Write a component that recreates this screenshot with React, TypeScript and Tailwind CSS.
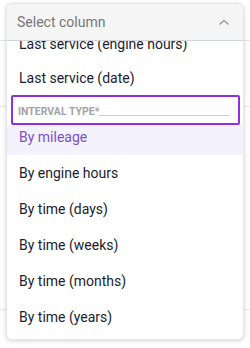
import React from 'react';

const before = ['Last service (engine hours)', 'Last service (date)'];
const after = ['By engine hours', 'By time (days)', 'By time (weeks)', 'By time (months)', 'By time (years)'];

function ChevronUp() {
  return (
    <svg width="10" height="6" viewBox="0 0 10 6" fill="none">
      <path d="M1 5L5 1.5L9 5" stroke="#9a9a9a" strokeWidth="1.6" strokeLinecap="round" strokeLinejoin="round" />
    </svg>
  );
}

export default function App() {
  return (
    <div className="relative w-[250px] h-[348px] bg-white overflow-hidden" style={{ fontFamily: 'Roboto, "Liberation Sans", sans-serif' }}>
      {/* table behind the menu */}
      <div className="absolute inset-0 flex flex-col">
        <div className="h-[41px] border-b border-gray-200" />
        <div className="h-[66px] border-b border-gray-200" />
        <div className="h-[203px] border-b border-gray-200" />
      </div>

      <div className="absolute left-[6px] top-[3px] w-[238px] h-[337px] bg-white rounded-md border border-gray-200 shadow-[0_1px_4px_rgba(0,0,0,0.18)] overflow-hidden flex flex-col">
        <div className="h-[37px] shrink-0 bg-[#f5f5f5] border-b border-gray-300 flex items-center justify-between pl-[10px] pr-[14px]">
          <span className="text-[14px] text-[#777777]">Select column</span>
          <ChevronUp />
        </div>

        <div className="flex-1 overflow-hidden">
          <div className="-mt-[14px]">
            {before.map((label) => (
              <div key={label} className="h-[34px] flex items-center pl-[12px] text-[14px] text-[#1a1d30]">
                {label}
              </div>
            ))}

            <div className="h-[30px] ml-[4px] mr-[3px] border-2 border-[#8f2fe4] rounded-[2px] flex items-end pl-[5px] pr-[9px] pb-[6px] bg-white">
              <span className="text-[10.5px] font-bold text-[#a3a3a3] leading-none whitespace-nowrap">INTERVAL TYPE*</span>
              <div className="flex-1 h-px bg-[#cfcfcf] mb-[1px]" />
            </div>

            <div className="h-[30px] bg-[#f4f2fc] flex items-center pl-[12px] pb-[5px] text-[14px] text-[#7d4fca]">
              By mileage
            </div>

            {after.map((label) => (
              <div key={label} className="h-[36px] flex items-center pl-[12px] text-[14px] text-[#1a1d30]">
                {label}
              </div>
            ))}
          </div>
        </div>
      </div>
    </div>
  );
}
